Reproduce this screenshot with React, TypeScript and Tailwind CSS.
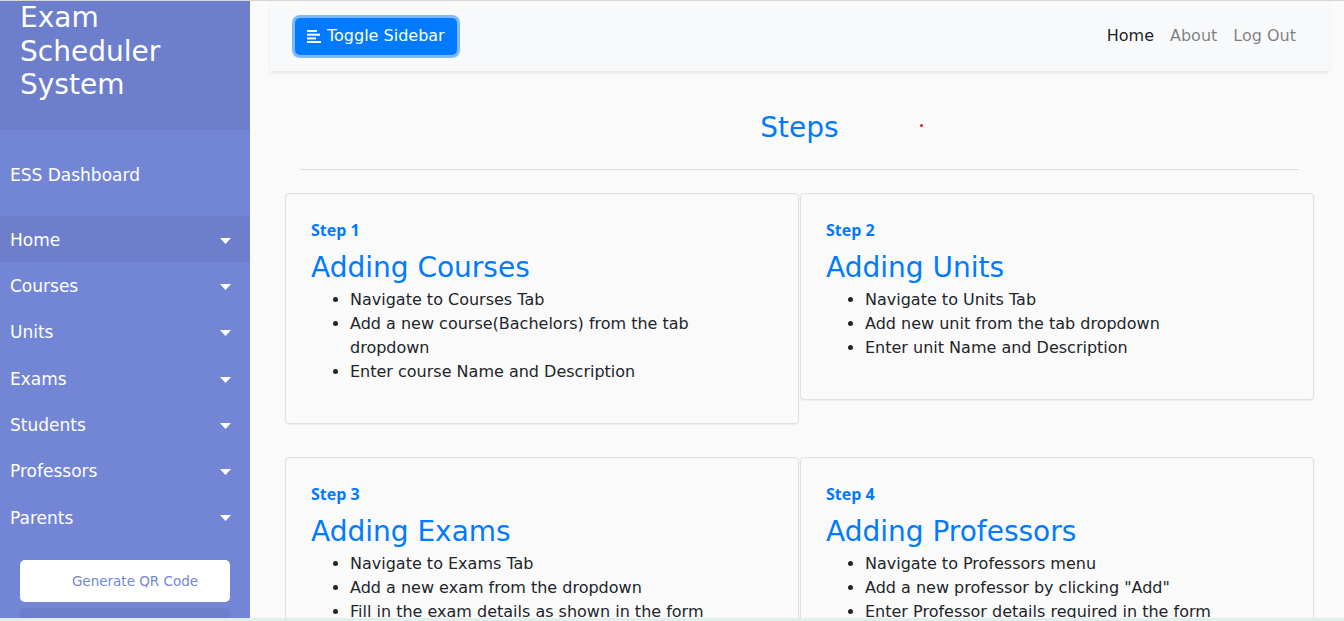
const menu = ['Home', 'Courses', 'Units', 'Exams', 'Students', 'Professors', 'Parents'];

const steps = [
  {
    label: 'Step 1',
    title: 'Adding Courses',
    items: ['Navigate to Courses Tab', 'Add a new course(Bachelors) from the tab\ndropdown', 'Enter course Name and Description'],
  },
  {
    label: 'Step 2',
    title: 'Adding Units',
    items: ['Navigate to Units Tab', 'Add new unit from the tab dropdown', 'Enter unit Name and Description'],
  },
  {
    label: 'Step 3',
    title: 'Adding Exams',
    items: ['Navigate to Exams Tab', 'Add a new exam from the dropdown', 'Fill in the exam details as shown in the form'],
  },
  {
    label: 'Step 4',
    title: 'Adding Professors',
    items: ['Navigate to Professors menu', 'Add a new professor by clicking "Add"', 'Enter Professor details required in the form'],
  },
];

function Caret() {
  return (
    <svg width="11" height="6" viewBox="0 0 11 6" className="shrink-0">
      <path d="M0 0 L11 0 L5.5 6 Z" fill="#ffffff" />
    </svg>
  );
}

function AlignLeft() {
  return (
    <svg width="14" height="13" viewBox="0 0 14 13" fill="#ffffff">
      <rect x="0" y="0" width="10" height="2" />
      <rect x="0" y="3.7" width="13" height="2" />
      <rect x="0" y="7.4" width="9" height="2" />
      <rect x="0" y="11" width="14" height="2" />
    </svg>
  );
}

export default function App() {
  return (
    <div
      className="relative h-screen overflow-hidden border-t border-[#d6d6d6] bg-[#fafafa] flex"
      style={{ fontFamily: '"DejaVu Sans", sans-serif' }}
    >
      {/* Sidebar */}
      <nav className="w-[250px] shrink-0 bg-[#7386d5] text-white flex flex-col">
        <div className="shrink-0 bg-[#6d7fcc] h-[129px] px-5">
          <h3 className="text-[28px] leading-[33.6px]">
            Exam
            <br />
            Scheduler
            <br />
            System
          </h3>
        </div>
        <div className="shrink-0 h-[86px] flex items-center pt-[6px] px-[10px] text-[17px]">ESS Dashboard</div>
        <ul className="shrink-0">
          {menu.map((item, idx) => (
            <li
              key={item}
              className={`h-[46.3px] flex items-center justify-between pt-[3px] pl-[10px] pr-[19px] text-[17px] ${idx === 0 ? 'bg-[#6d7fcc]' : ''}`}
            >
              <span>{item}</span>
              <Caret />
            </li>
          ))}
        </ul>
        <div className="shrink-0 px-5 mt-5 flex flex-col gap-[6px]">
          <button className="h-[42px] rounded-[5px] bg-white text-[#7386d5] text-[13.5px] pl-5">
            Generate QR Code
          </button>
          <div className="h-[42px] rounded-[5px] bg-[#6d7fcc]" />
        </div>
      </nav>

      {/* Content */}
      <div className="flex-1 pl-5 pr-[15px]">
        <div className="h-[70px] bg-[#f8f9fa] shadow-[0_2px_3px_rgba(0,0,0,0.08)] flex items-center justify-between pl-[25px] pr-[25px]">
          <button className="h-[37px] px-[12px] rounded-[5px] bg-[#007bff] text-white text-[16px] flex items-center gap-[6px] ring-[3px] ring-[#007bff]/50">
            <AlignLeft />
            Toggle Sidebar
          </button>
          <div className="flex text-[16px]">
            <span className="px-2 text-black/90">Home</span>
            <span className="px-2 text-black/50">About</span>
            <span className="px-2 text-black/50">Log Out</span>
          </div>
        </div>

        <div className="px-[15px]">
          <div className="relative mt-[40px] text-center">
            <h2 className="text-[28px] leading-[34px] text-[#007bff]">Steps</h2>
            <span className="absolute left-[635px] top-[13px] w-[3px] h-[3px] rounded-full bg-[#e0202a]" />
          </div>
          <hr className="mt-[24px] mx-[15px] border-t border-[#dddddd]" />

          <div className="grid grid-cols-2 gap-x-px gap-y-[33px] mt-[23px] items-start">
            {steps.map((s) => (
              <div
                key={s.label}
                className="border border-[#dfe1e4] rounded-[4px] bg-[#fafafb] shadow-[0_1px_2px_rgba(0,0,0,0.06)] pl-[25px] pr-[25px] pt-[26px] pb-[39px]"
              >
                <div
                  className="text-[16px] leading-[20px] font-bold text-[#007bff]"
                  style={{ fontFamily: '"Open Sans", sans-serif' }}
                >
                  {s.label}
                </div>
                <h3 className="mt-[11px] text-[28px] leading-[34px] text-[#007bff]">{s.title}</h3>
                <ul className="mt-[3px] pl-[39px] list-disc text-[16px] leading-[24px] text-[#212529]">
                  {s.items.map((it) => (
                    <li key={it} className="whitespace-pre-line">
                      {it}
                    </li>
                  ))}
                </ul>
              </div>
            ))}
          </div>
        </div>
      </div>

      <div className="absolute bottom-0 left-0 right-0 h-[3px] bg-[#deefec]" />
    </div>
  );
}
